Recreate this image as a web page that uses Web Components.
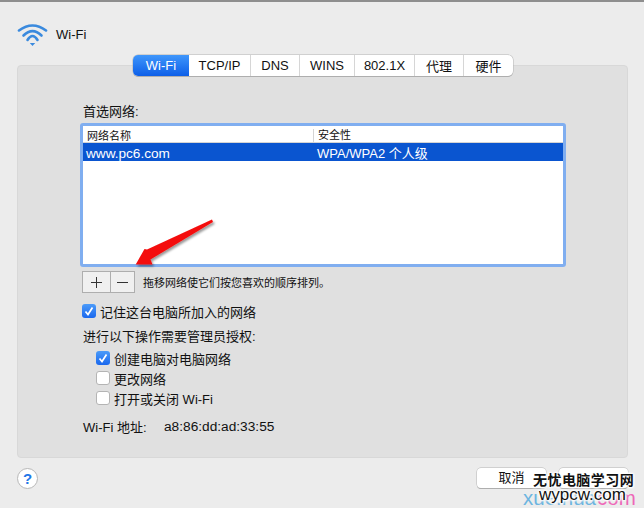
<!DOCTYPE html>
<html lang="zh">
<head>
<meta charset="utf-8">
<title>Wi-Fi</title>
<style>
	html, body { margin: 0; height: 100%; }
	body { background: #ececec; overflow: hidden; }
</style>
</head>
<body>
<wifi-pane></wifi-pane>
<script>
const FONT = `"Liberation Sans", "Noto Sans CJK SC", sans-serif`

class SegTabs extends HTMLElement {
	constructor(){
		super()
		const tabs = [['Wi-Fi', 56], ['TCP/IP', 61], ['DNS', 49], ['WINS', 55], ['802.1X', 60], ['代理', 49], ['硬件', 50]]
		const root = this.attachShadow({mode: 'open'})
		root.innerHTML = `<style>
			:host { display: flex; height: 21px; box-sizing: border-box; background: #fff; border-radius: 5px; box-shadow: 0 0 0 .5px #b4b4b4, 0 1px 0 #a8a8a8; font: 13px ${FONT}; color: #111; }
			span { display: flex; align-items: center; justify-content: center; box-sizing: border-box; border-left: 1px solid #d6d6d6; }
			span:first-of-type { border: 0; border-radius: 5px 0 0 5px; color: #fff; background: linear-gradient(#3f96fb, #0d5fe8); }
			span:nth-of-type(2) { border: 0; }
		</style>${tabs.map(t => `<span style="width:${t[1]}px">${t[0]}</span>`).join('')}`
	}
}

class NetTable extends HTMLElement {
	constructor(){
		super()
		const root = this.attachShadow({mode: 'open'})
		root.innerHTML = `<style>
			:host { display: block; box-sizing: border-box; width: 486px; height: 144px; background: #fff; border: 3px solid #80aef0; border-radius: 3px; padding-top: 1px; font-family: ${FONT}; color: #111; }
			.head, .row { display: grid; grid-template-columns: 230px 1fr; align-items: center; }
			.head { height: 15px; font-size: 11px; box-shadow: 0 1px 0 #d4d4d4; }
			.head span { padding-left: 4px; }
			.head span + span { border-left: 1px solid #d4d4d4; padding-left: 4px; line-height: 13px; }
			.row { height: 18px; margin-top: 1px; background: #0a55d0; color: #fff; font-size: 13.6px; }
			.row span { padding: 1px 0 0 3px; }
			.row span + span { padding: 0 0 0 4px; font-size: 13px; }
		</style>
		<div class="head"><span>网络名称</span><span>安全性</span></div>
		<div class="row"><span>www.pc6.com</span><span>WPA/WPA2 个人级</span></div>`
	}
}

class AddRemove extends HTMLElement {
	constructor(){
		super()
		const root = this.attachShadow({mode: 'open'})
		root.innerHTML = `<style>
			:host { display: flex; box-sizing: border-box; width: 53px; height: 22px; background: #f0f0f0; border: 1px solid #aeaeae; }
			div { flex: 1; display: flex; align-items: center; justify-content: center; }
			div + div { border-left: 1px solid #aeaeae; flex: 0 0 23px; }
			svg { display: block; }
		</style>
		<div><svg width="11" height="11" viewBox="0 0 11 11"><path d="M0 5.5h11M5.5 0v11" stroke="#333" fill="none"/></svg></div>
		<div><svg width="11" height="11" viewBox="0 0 11 11"><path d="M0 5.5h11" stroke="#333" fill="none"/></svg></div>`
	}
}

class CheckRow extends HTMLElement {
	constructor(){
		super()
		const checked = this.hasAttribute('checked')
		const root = this.attachShadow({mode: 'open'})
		root.innerHTML = `<style>
			:host { display: flex; align-items: center; gap: 4px; height: 20px; font: 13px ${FONT}; color: #111; }
			i { display: block; box-sizing: border-box; width: 14px; height: 14px; border-radius: 3px; }
			i.on { background: linear-gradient(#4b9bf9, #1a68ee); }
			i.off { background: #fff; border: 1px solid #b4b4b4; }
			svg { display: block; }
		</style>
		<i class="${checked ? 'on' : 'off'}">${checked ? '<svg width="14" height="14" viewBox="0 0 14 14"><path d="M3.5 7.5l2.5 3L10.5 3.5" stroke="#fff" stroke-width="1.7" fill="none"/></svg>' : ''}</i>
		<span><slot></slot></span>`
	}
}

class WifiPane extends HTMLElement {
	constructor(){
		super()
		const root = this.attachShadow({mode: 'open'})
		root.innerHTML = `<style>
			:host { display: block; position: relative; width: 644px; height: 508px; box-sizing: border-box; overflow: hidden; border-top: 2px solid #8e8e8e; font: 13px ${FONT}; color: #111; background: #ececec; }
			.title { display: flex; align-items: center; gap: 8px; height: 32px; margin: 16px 0 0 17px; }
			.panel { position: relative; box-sizing: border-box; width: 611px; height: 393px; margin: 15px 0 0 17px; padding: 38px 0 0 65px; background: #e0e0e0; border: 1px solid #d8d8d8; border-radius: 4px; }
			seg-tabs { position: absolute; left: 115px; top: -11px; width: 380px; }
			.label { height: 16px; line-height: 16px; margin-bottom: 3px; }
			net-table { margin-left: -3px; }
			.sortline { display: flex; align-items: center; gap: 8px; margin: 4px 0 0 -1px; font-size: 11px; }
			.first { margin: 8px 0 0 -1px; }
			.need { margin-top: 6px; height: 20px; line-height: 20px; }
			.sub { margin: 1px 0 0 13px; }
			.addr { margin-top: 8px; display: flex; height: 20px; align-items: center; }
			.addr span:first-child { width: 81px; }
			.addr span + span { font-size: 13.7px; }
			.foot { display: flex; justify-content: space-between; margin: 10px 16px 0 17px; }
			.help { width: 21px; height: 21px; box-sizing: border-box; border-radius: 50%; background: #fff; border: 1px solid #b8b8b8; color: #2277e8; font: bold 15px/19px ${FONT}; text-align: center; }
			.btns { display: flex; gap: 13px; }
			.btn { width: 69px; height: 20px; background: #fff; border-radius: 4px; box-shadow: 0 0 0 .5px #b4b4b4, 0 1px 0 #a8a8a8; text-align: center; line-height: 20px; }
			.arrow { position: absolute; left: 130px; top: 212px; }
			.mark { position: absolute; white-space: nowrap; line-height: 1; }
			.halo { color: #111; text-shadow: 0 0 2px #fff, 0 0 2px #fff, 0 0 3px #fff, 1px 1px 2px #fff, -1px -1px 2px #fff, 1px -1px 2px #fff, -1px 1px 2px #fff; }
			.cn { left: 533px; top: 471px; font-size: 14px; letter-spacing: .45px; font-weight: bold; }
			.en { left: 539px; top: 484px; font-size: 17px; }
			.xu { left: 523px; top: 486px; font-size: 20.500px; color: #6db5e0; }
			.com { left: 597px; top: 486px; font-size: 20.500px; color: #ee66b8; }
		</style>
		<div class="title">
			<svg width="31" height="23" viewBox="0 0 31 23"><g fill="none" stroke="#3a8ade" stroke-width="2.600" stroke-linecap="round"><path d="M2 7.500Q15.500 -2.500 29 7.500"/><path d="M6.500 12.500Q15.500 3.500 24.500 12.500"/><path d="M10.500 17Q15.500 9 20.500 17"/></g><path d="M12.800 20h5.400l-2.700 3z" fill="#3a8ade"/></svg>
			<span>Wi-Fi</span>
		</div>
		<div class="panel">
			<seg-tabs></seg-tabs>
			<div class="label">首选网络:</div>
			<net-table></net-table>
			<div class="sortline"><add-remove></add-remove><span>拖移网络使它们按您喜欢的顺序排列。</span></div>
			<check-row class="first" checked>记住这台电脑所加入的网络</check-row>
			<div class="need">进行以下操作需要管理员授权:</div>
			<div class="sub">
				<check-row checked>创建电脑对电脑网络</check-row>
				<check-row>更改网络</check-row>
				<check-row>打开或关闭 Wi-Fi</check-row>
			</div>
			<div class="addr"><span>Wi-Fi 地址:</span><span>a8:86:dd:ad:33:55</span></div>
		</div>
		<div class="foot">
			<div class="help">?</div>
			<div class="btns"><div class="btn">取消</div><div class="btn"></div></div>
		</div>
		<svg class="arrow" width="92" height="56" viewBox="0 0 92 56"><defs><filter id="s" x="-20%" y="-20%" width="140%" height="150%"><feDropShadow dx="1.500" dy="2" stdDeviation="1.200" flood-color="#000" flood-opacity=".4"/></filter></defs><path d="M82 5.500L83 8 20.500 45.500 22.500 50.500H5.700L14.500 35 17 35.500z" fill="#f40f0f" filter="url(#s)"/></svg>
		<div class="mark xu">xue.hua</div>
		<div class="mark com">com</div>
		<div class="mark halo cn">无忧电脑学习网</div>
		<div class="mark halo en">wypcw.com</div>`
	}
}

customElements.define('seg-tabs', SegTabs)
customElements.define('net-table', NetTable)
customElements.define('add-remove', AddRemove)
customElements.define('check-row', CheckRow)
customElements.define('wifi-pane', WifiPane)
</script>
</body>
</html>
